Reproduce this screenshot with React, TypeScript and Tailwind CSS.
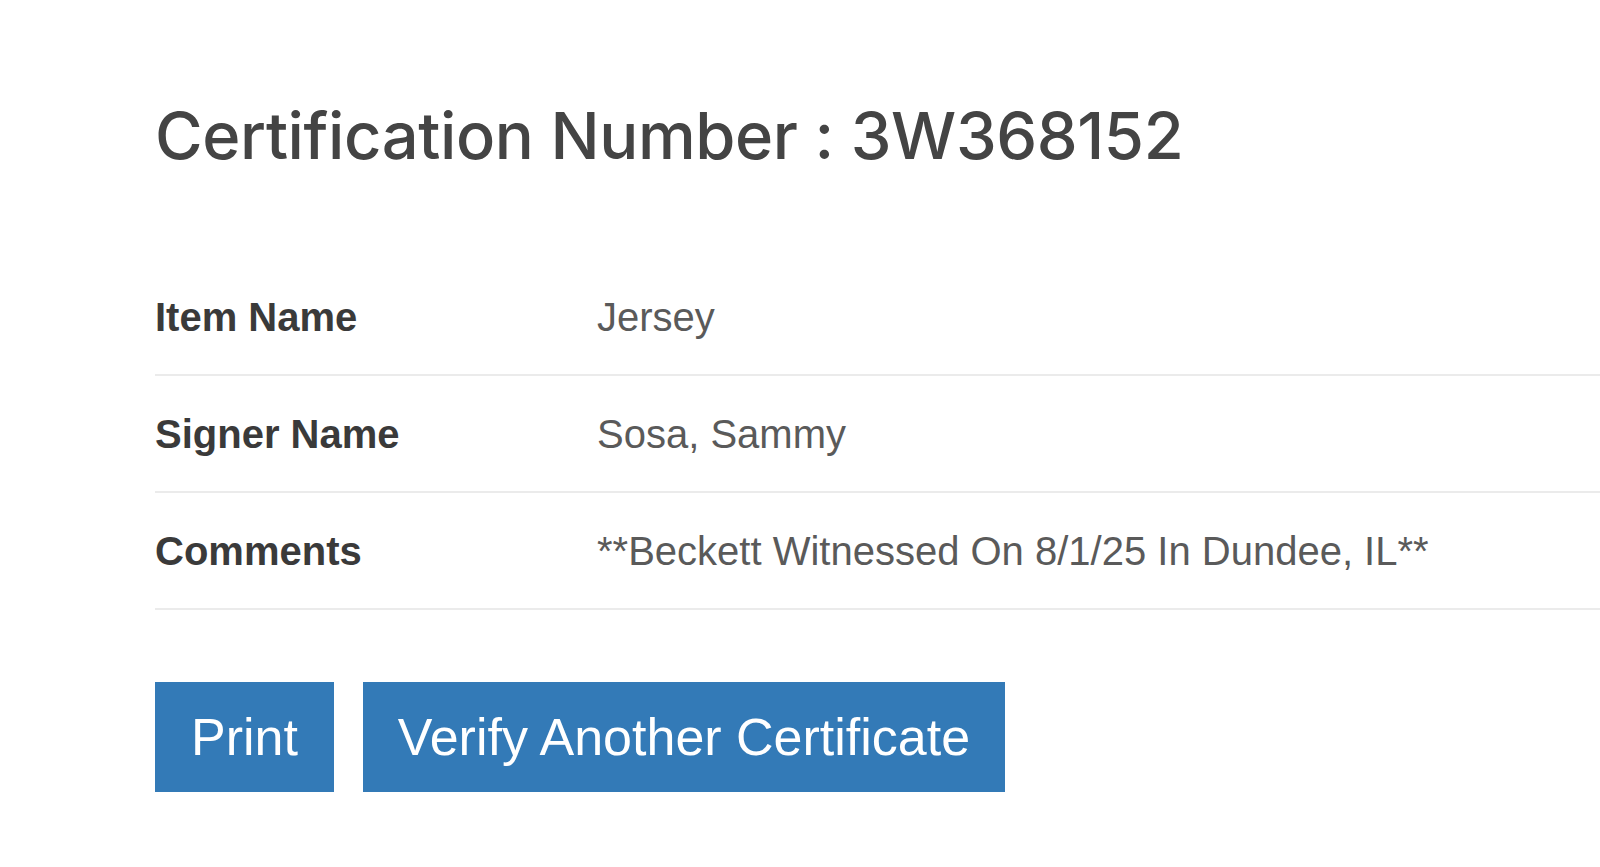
import React from 'react'

const rows = [
  { label: 'Item Name', value: 'Jersey' },
  { label: 'Signer Name', value: 'Sosa, Sammy' },
  { label: 'Comments', value: '**Beckett Witnessed On 8/1/25 In Dundee, IL**' },
]

export default function App() {
  return (
    <div className="min-h-[867px] w-full overflow-hidden bg-white">
      <div className="pl-[155px]">
        <h1 className="h-[259px] pt-[98px] text-[65px] leading-[76px] font-medium tracking-[-0.4px] text-[#444444] font-['Inter',sans-serif]">
          Certification Number : 3W368152
        </h1>
        <div className="font-['Liberation_Sans',Arial,sans-serif] text-[40px]">
          {rows.map((row) => (
            <div key={row.label} className="flex h-[117px] items-center border-b-2 border-[#ebebeb]">
              <div className="w-[442px] shrink-0 font-bold text-[#3a3a3a]">{row.label}</div>
              <div className="text-[#5a5a5a]">{row.value}</div>
            </div>
          ))}
        </div>
        <div className="mt-[72px] flex gap-[29px] font-['Liberation_Sans',Arial,sans-serif] text-[52px] text-white">
          <button className="h-[110px] w-[179px] bg-[#337ab7]">Print</button>
          <button className="h-[110px] w-[642px] bg-[#337ab7]">Verify Another Certificate</button>
        </div>
      </div>
    </div>
  )
}
